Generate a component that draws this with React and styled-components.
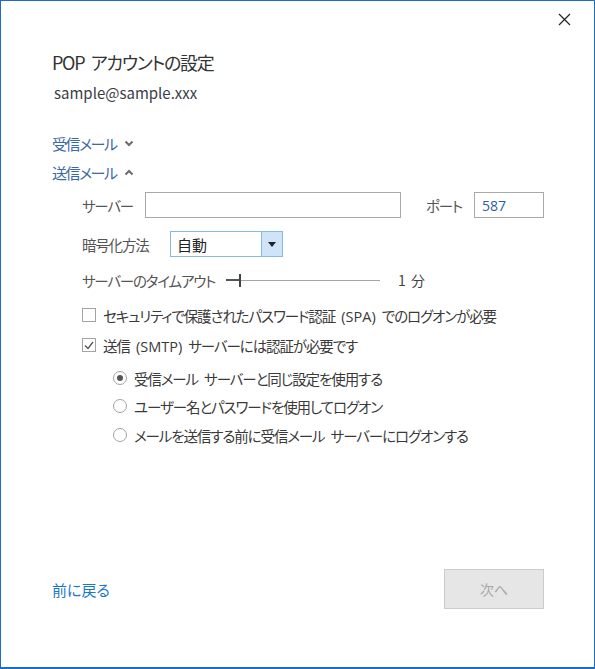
import React from "react";
import styled, { createGlobalStyle } from "styled-components";

const GlobalStyle = createGlobalStyle`
  html, body {
    margin: 0;
    padding: 0;
    background: #ffffff;
  }
  body {
    font-family: "Noto Sans CJK JP", "Noto Sans", sans-serif;
    font-feature-settings: "palt";
  }
`;

const Window = styled.div`
  width: 595px;
  height: 669px;
  box-sizing: border-box;
  border: 1px solid #1b6ec2;
  border-bottom-width: 2px;
  display: flex;
  flex-direction: column;
  background: #fff;
  color: #333;
`;

const TopBar = styled.div`
  height: 37px;
  display: flex;
  justify-content: flex-end;
  align-items: center;
  padding-right: 23px;
`;

const CloseButton = styled.button`
  width: 14px;
  height: 14px;
  padding: 0;
  border: 0;
  background: transparent;
  display: flex;
  align-items: center;
  justify-content: center;
`;

const Body = styled.div`
  padding-left: 51px;
  display: flex;
  flex-direction: column;
  flex: 1;
`;

const Title = styled.h1`
  margin: 12px 0 0;
  height: 24px;
  line-height: 24px;
  font-size: 18px;
  font-weight: 400;
  letter-spacing: -1.3px;
  word-spacing: 4px;
  color: #333;
`;

const Email = styled.div`
  margin: 8px 0 0 2px;
  height: 22px;
  line-height: 22px;
  font-size: 15px;
  color: #3c3c46;
`;

const SectionToggle = styled.div`
  margin-top: ${(p) => p.$mt}px;
  height: 22px;
  display: flex;
  align-items: center;
  gap: 8px;
  font-size: 15px;
  letter-spacing: -1.5px;
  color: #3a68a8;
`;

const Indent = styled.div`
  padding-left: 30px;
  display: flex;
  flex-direction: column;
`;

const Row = styled.div`
  margin-top: ${(p) => p.$mt}px;
  height: ${(p) => p.$h || 20}px;
  display: flex;
  align-items: center;
  font-size: 14.5px;
  color: #555;
`;

const Label = styled.span`
  width: ${(p) => p.$w}px;
  flex: none;
  letter-spacing: -1.2px;
  white-space: nowrap;
`;

const TextInput = styled.div`
  box-sizing: border-box;
  width: ${(p) => p.$w}px;
  height: 26px;
  border: 1px solid #a9a9a9;
  display: flex;
  align-items: center;
  padding-left: 7px;
  font-family: "Open Sans", "Noto Sans", sans-serif;
  font-size: 14px;
  color: #2d5f9e;
`;

const Select = styled.div`
  box-sizing: border-box;
  width: 113px;
  height: 26px;
  border: 1px solid #86b9e6;
  display: flex;
  align-items: stretch;
`;

const SelectValue = styled.span`
  flex: 1;
  display: flex;
  align-items: center;
  padding-left: 6px;
  font-size: 15px;
  color: #222;
`;

const SelectArrow = styled.span`
  width: 20px;
  flex: none;
  background: #cfe5f7;
  border-left: 1px solid #86b9e6;
  display: flex;
  align-items: center;
  justify-content: center;
`;

const Slider = styled.div`
  position: relative;
  width: 154px;
  height: 14px;
  margin-right: 18px;
`;

const Track = styled.div`
  position: absolute;
  left: 0;
  right: 0;
  top: 7px;
  height: 1px;
  background: #a5a5a5;
`;

const TrackFill = styled.div`
  position: absolute;
  left: 0;
  top: 6px;
  width: 14px;
  height: 2px;
  background: #555;
`;

const Thumb = styled.div`
  position: absolute;
  left: 13px;
  top: 1px;
  width: 2px;
  height: 13px;
  background: #444;
`;

const Value = styled.span`
  font-size: 14px;
  color: #444;
  letter-spacing: 1px;
`;

const Option = styled.label`
  margin-top: ${(p) => p.$mt}px;
  margin-left: ${(p) => p.$ml || 0}px;
  height: 20px;
  display: flex;
  align-items: center;
  font-size: 14.5px;
  letter-spacing: -1.1px;
  word-spacing: 4px;
  color: #3a3a3a;
  white-space: pre;
`;

const OptionText = styled.span`
  margin-left: 7px;
`;

const Latin = styled.span`
  font-family: "Open Sans", "Noto Sans", sans-serif;
  font-size: 14.5px;
  letter-spacing: 0;
`;

const Box = styled.span`
  box-sizing: border-box;
  width: 14px;
  height: 14px;
  border: 1px solid #a3a3a3;
  background: #fff;
  display: flex;
  align-items: center;
  justify-content: center;
  flex: none;
`;

const Radio = styled.span`
  box-sizing: border-box;
  width: 14px;
  height: 14px;
  border-radius: 50%;
  border: 1px solid #a3a3a3;
  background: #fff;
  display: flex;
  align-items: center;
  justify-content: center;
  flex: none;

  &::after {
    content: "";
    width: 6px;
    height: 6px;
    border-radius: 50%;
    background: ${(p) => (p.$checked ? "#555" : "transparent")};
  }
`;

const Footer = styled.div`
  margin-top: auto;
  padding: 0 50px 58px 51px;
  display: flex;
  align-items: center;
  justify-content: space-between;
`;

const BackLink = styled.a`
  font-size: 15px;
  color: #1a78cc;
  text-decoration: none;
`;

const NextButton = styled.button`
  box-sizing: border-box;
  width: 100px;
  height: 40px;
  background: #e6e6e6;
  border: 1px solid #cccccc;
  color: #a6a6a6;
  font-family: inherit;
  font-size: 14px;
`;

const Chevron = ({ up }) => (
  <svg width="10" height="7" viewBox="0 0 10 7">
    <path
      d={up ? "M1.5 5.5 L5 2 L8.5 5.5" : "M1.5 1.5 L5 5 L8.5 1.5"}
      fill="none"
      stroke="#6b6b6b"
      strokeWidth="2"
    />
  </svg>
);

const App = () => (
  <>
    <GlobalStyle />
    <Window>
      <TopBar>
        <CloseButton aria-label="閉じる">
          <svg width="13" height="13" viewBox="0 0 13 13">
            <path d="M1 1 L12 12 M12 1 L1 12" stroke="#222" strokeWidth="1.2" />
          </svg>
        </CloseButton>
      </TopBar>
      <Body>
        <Title>POP アカウントの設定</Title>
        <Email>sample@sample.xxx</Email>
        <SectionToggle $mt={28}>
          受信メール <Chevron />
        </SectionToggle>
        <SectionToggle $mt={7}>
          送信メール <Chevron up />
        </SectionToggle>
        <Indent>
          <Row $mt={9} $h={26}>
            <Label $w={63}>サーバー</Label>
            <TextInput $w={256} />
            <Label $w={25} />
            <Label $w={48}>ポート</Label>
            <TextInput $w={70}>587</TextInput>
          </Row>
          <Row $mt={13} $h={26}>
            <Label $w={88}>暗号化方法</Label>
            <Select>
              <SelectValue>自動</SelectValue>
              <SelectArrow>
                <svg width="8" height="5" viewBox="0 0 8 5">
                  <path d="M0 0 H8 L4 5 Z" fill="#222" />
                </svg>
              </SelectArrow>
            </Select>
          </Row>
          <Row $mt={13}>
            <Label $w={144}>サーバーのタイムアウト</Label>
            <Slider>
              <Track />
              <TrackFill />
              <Thumb />
            </Slider>
            <Value>1 分</Value>
          </Row>
          <Option $mt={15}>
            <Box />
            <OptionText>
              セキュリティで保護されたパスワード認証 <Latin>(SPA)</Latin> でのログオンが必要
            </OptionText>
          </Option>
          <Option $mt={10}>
            <Box>
              <svg width="10" height="9" viewBox="0 0 10 9">
                <path d="M1 4.5 L4 7.5 L9 1" fill="none" stroke="#555" strokeWidth="1.3" />
              </svg>
            </Box>
            <OptionText>
              送信 <Latin>(SMTP)</Latin> サーバーには認証が必要です
            </OptionText>
          </Option>
          <Option $mt={13} $ml={31}>
            <Radio $checked />
            <OptionText>受信メール サーバーと同じ設定を使用する</OptionText>
          </Option>
          <Option $mt={8} $ml={31}>
            <Radio />
            <OptionText>ユーザー名とパスワードを使用してログオン</OptionText>
          </Option>
          <Option $mt={9} $ml={31}>
            <Radio />
            <OptionText>メールを送信する前に受信メール サーバーにログオンする</OptionText>
          </Option>
        </Indent>
      </Body>
      <Footer>
        <BackLink href="#">前に戻る</BackLink>
        <NextButton disabled>次へ</NextButton>
      </Footer>
    </Window>
  </>
);

export default App;
